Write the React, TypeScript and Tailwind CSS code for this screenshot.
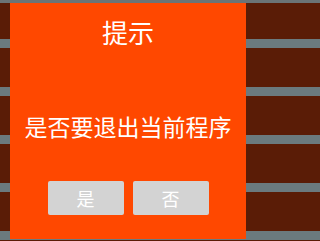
import React from 'react';

export default function App() {
  return (
    <div
      className="w-full min-w-[262px] h-[241px] overflow-hidden border-t-[3px] border-[#6b7476] bg-[repeating-linear-gradient(to_bottom,#5a1c06_0px,#5a1c06_36px,#6b7a7e_36px,#6b7a7e_45px,#5a1c06_45px,#5a1c06_48px)]"
      style={{ fontFamily: '"Noto Sans CJK SC", "Noto Sans", sans-serif' }}
    >
      <div className="ml-[10px] w-[236px] h-[236px] bg-[#ff4800] flex flex-col items-center pt-[16px]">
        <div className="text-[26px] leading-[26px] text-white">提示</div>
        <div className="mt-[70px] text-[23px] leading-[23px] text-white">是否要退出当前程序</div>
        <div className="mt-[43px] flex gap-[9px]">
          <button className="w-[76px] h-[34px] rounded-[2px] bg-[#d3d3d3] text-white text-[18px] leading-none">是</button>
          <button className="w-[76px] h-[34px] rounded-[2px] bg-[#d3d3d3] text-white text-[18px] leading-none">否</button>
        </div>
      </div>
    </div>
  );
}
